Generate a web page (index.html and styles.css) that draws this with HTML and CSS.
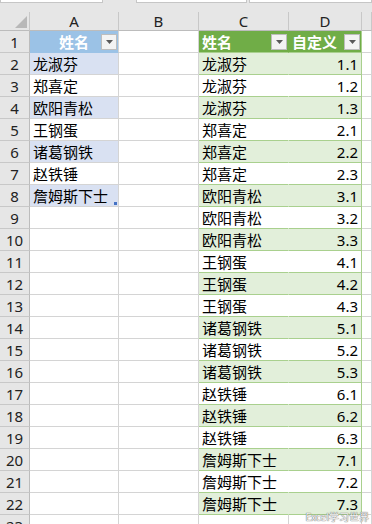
FILE: index.html
```html
<!DOCTYPE html>
<html lang="zh">
<head>
<meta charset="utf-8">
<link rel="stylesheet" href="styles.css">
</head>
<body>
<div class="app">
  <div class="topbar">
    <div class="box box1"></div>
    <div class="box box2"></div>
    <div class="box box3"></div>
  </div>
  <div class="sheet">
    <div class="c hd corner"><span class="tri"></span></div>
    <div class="c hd">A</div>
    <div class="c hd">B</div>
    <div class="c hd">C</div>
    <div class="c hd">D</div>
    <div class="c hd"></div>

    <div class="c rh">1</div>
    <div class="c bh center">姓名<span class="dd"><svg width="7" height="4" viewBox="0 0 7 4"><path d="M0 0h7L3.5 4z" fill="#595959"/></svg></span></div>
    <div class="c"></div>
    <div class="c gh">姓名<span class="dd"><svg width="7" height="4" viewBox="0 0 7 4"><path d="M0 0h7L3.5 4z" fill="#595959"/></svg></span></div>
    <div class="c gh gr">自定义<span class="dd"><svg width="7" height="4" viewBox="0 0 7 4"><path d="M0 0h7L3.5 4z" fill="#595959"/></svg></span></div>
    <div class="c"></div>

    <div class="c rh">2</div><div class="c bb">龙淑芬</div><div class="c"></div><div class="c gb">龙淑芬</div><div class="c gb gr num">1.1</div><div class="c"></div>
    <div class="c rh">3</div><div class="c">郑喜定</div><div class="c"></div><div class="c gw">龙淑芬</div><div class="c gw gr num">1.2</div><div class="c"></div>
    <div class="c rh">4</div><div class="c bb">欧阳青松</div><div class="c"></div><div class="c gb">龙淑芬</div><div class="c gb gr num">1.3</div><div class="c"></div>
    <div class="c rh">5</div><div class="c">王钢蛋</div><div class="c"></div><div class="c gw">郑喜定</div><div class="c gw gr num">2.1</div><div class="c"></div>
    <div class="c rh">6</div><div class="c bb">诸葛钢铁</div><div class="c"></div><div class="c gb">郑喜定</div><div class="c gb gr num">2.2</div><div class="c"></div>
    <div class="c rh">7</div><div class="c">赵铁锤</div><div class="c"></div><div class="c gw">郑喜定</div><div class="c gw gr num">2.3</div><div class="c"></div>
    <div class="c rh">8</div><div class="c bb">詹姆斯下士<span class="rs"></span></div><div class="c"></div><div class="c gb">欧阳青松</div><div class="c gb gr num">3.1</div><div class="c"></div>
    <div class="c rh">9</div><div class="c"></div><div class="c"></div><div class="c gw">欧阳青松</div><div class="c gw gr num">3.2</div><div class="c"></div>
    <div class="c rh">10</div><div class="c"></div><div class="c"></div><div class="c gb">欧阳青松</div><div class="c gb gr num">3.3</div><div class="c"></div>
    <div class="c rh">11</div><div class="c"></div><div class="c"></div><div class="c gw">王钢蛋</div><div class="c gw gr num">4.1</div><div class="c"></div>
    <div class="c rh">12</div><div class="c"></div><div class="c"></div><div class="c gb">王钢蛋</div><div class="c gb gr num">4.2</div><div class="c"></div>
    <div class="c rh">13</div><div class="c"></div><div class="c"></div><div class="c gw">王钢蛋</div><div class="c gw gr num">4.3</div><div class="c"></div>
    <div class="c rh">14</div><div class="c"></div><div class="c"></div><div class="c gb">诸葛钢铁</div><div class="c gb gr num">5.1</div><div class="c"></div>
    <div class="c rh">15</div><div class="c"></div><div class="c"></div><div class="c gw">诸葛钢铁</div><div class="c gw gr num">5.2</div><div class="c"></div>
    <div class="c rh">16</div><div class="c"></div><div class="c"></div><div class="c gb">诸葛钢铁</div><div class="c gb gr num">5.3</div><div class="c"></div>
    <div class="c rh">17</div><div class="c"></div><div class="c"></div><div class="c gw">赵铁锤</div><div class="c gw gr num">6.1</div><div class="c"></div>
    <div class="c rh">18</div><div class="c"></div><div class="c"></div><div class="c gb">赵铁锤</div><div class="c gb gr num">6.2</div><div class="c"></div>
    <div class="c rh">19</div><div class="c"></div><div class="c"></div><div class="c gw">赵铁锤</div><div class="c gw gr num">6.3</div><div class="c"></div>
    <div class="c rh">20</div><div class="c"></div><div class="c"></div><div class="c gb">詹姆斯下士</div><div class="c gb gr num">7.1</div><div class="c"></div>
    <div class="c rh">21</div><div class="c"></div><div class="c"></div><div class="c gw">詹姆斯下士</div><div class="c gw gr num">7.2</div><div class="c"></div>
    <div class="c rh">22</div><div class="c"></div><div class="c"></div><div class="c gb">詹姆斯下士</div><div class="c gb gr num">7.3</div><div class="c"></div>
    <div class="c rh">23</div><div class="c"></div><div class="c"></div><div class="c"></div><div class="c"></div><div class="c"></div>
  </div>
  <div class="wm">Excel学习世界</div>
</div>
</body>
</html>
```
FILE: styles.css
```css
html, body {
  margin: 0;
  padding: 0;
  background: #fff;
}
.app {
  position: relative;
  width: 372px;
  height: 524px;
  overflow: hidden;
  font-family: "Noto Sans CJK SC", "Noto Sans", sans-serif;
  color: #000;
}
.topbar {
  height: 12px;
  background: #e6e6e6;
  display: flex;
  align-items: flex-start;
}
.box {
  height: 2px;
  background: #fff;
  border: 1px solid #c6c6c6;
  border-top: none;
}
.box1 { width: 101px; }
.box2 { width: 109px; margin-left: 33px; }
.box3 { margin-left: 2px; flex: 1; }
.sheet {
  display: grid;
  grid-template-columns: 30px 89px 80px 90px 73px 10px;
  grid-template-rows: 19px;
  grid-auto-rows: 22px;
}
.c {
  box-sizing: border-box;
  border-right: 1px solid #d4d4d4;
  border-bottom: 1px solid #d4d4d4;
  font-size: 15px;
  line-height: 20px;
  padding: 0 3px;
  display: flex;
  align-items: center;
  white-space: nowrap;
  overflow: hidden;
  position: relative;
}
.hd {
  background: #e6e6e6;
  justify-content: center;
  border-right-color: #c8c8c8;
  border-bottom-color: #bcbcbc;
  font-family: "Noto Sans", sans-serif;
  font-size: 15px;
  color: #222;
}
.rh {
  background: #e6e6e6;
  justify-content: center;
  border-right-color: #bcbcbc;
  border-bottom-color: #c8c8c8;
  font-family: "Noto Sans", sans-serif;
  font-size: 15px;
  color: #222;
  padding: 0;
}
.corner {
  padding: 0;
}
.tri {
  position: absolute;
  right: 2px;
  bottom: 2px;
  width: 0;
  height: 0;
  border-left: 12px solid transparent;
  border-bottom: 12px solid #b8b8b8;
}
.bh {
  background: #9bc2e6;
  color: #fff;
  font-weight: bold;
  border-bottom-color: #9bc2e6;
}
.center {
  justify-content: center;
}
.bb {
  background: #d9e1f2;
}
.gh {
  background: #70ad47;
  color: #fff;
  font-weight: bold;
  border-right-color: #70ad47;
  border-bottom-color: #a9d08e;
}
.gb {
  background: #e2efda;
  border-right-color: #e2efda;
  border-bottom-color: #a9d08e;
}
.gw {
  background: #fff;
  border-right-color: #fff;
  border-bottom-color: #a9d08e;
}
.gr,
.gh.gr {
  border-right-color: #a9d08e;
}
.num {
  justify-content: flex-end;
  font-family: "Noto Sans", sans-serif;
  padding-right: 3px;
}
.dd {
  position: absolute;
  right: 1px;
  bottom: 2px;
  box-sizing: border-box;
  width: 16px;
  height: 16px;
  background: #f3f3f3;
  border: 1px solid #bdbdbd;
  display: flex;
  align-items: center;
  justify-content: center;
}
.rs {
  position: absolute;
  right: 1px;
  bottom: 1px;
  width: 3px;
  height: 3px;
  background: #4472c4;
}
.wm {
  position: absolute;
  right: 3px;
  bottom: 1px;
  font-size: 10px;
  line-height: 12px;
  color: #f4f4f4;
  text-shadow: 0 0 1px #666, 0 0 1px #666;
  font-family: "Noto Sans CJK SC", sans-serif;
}
```
